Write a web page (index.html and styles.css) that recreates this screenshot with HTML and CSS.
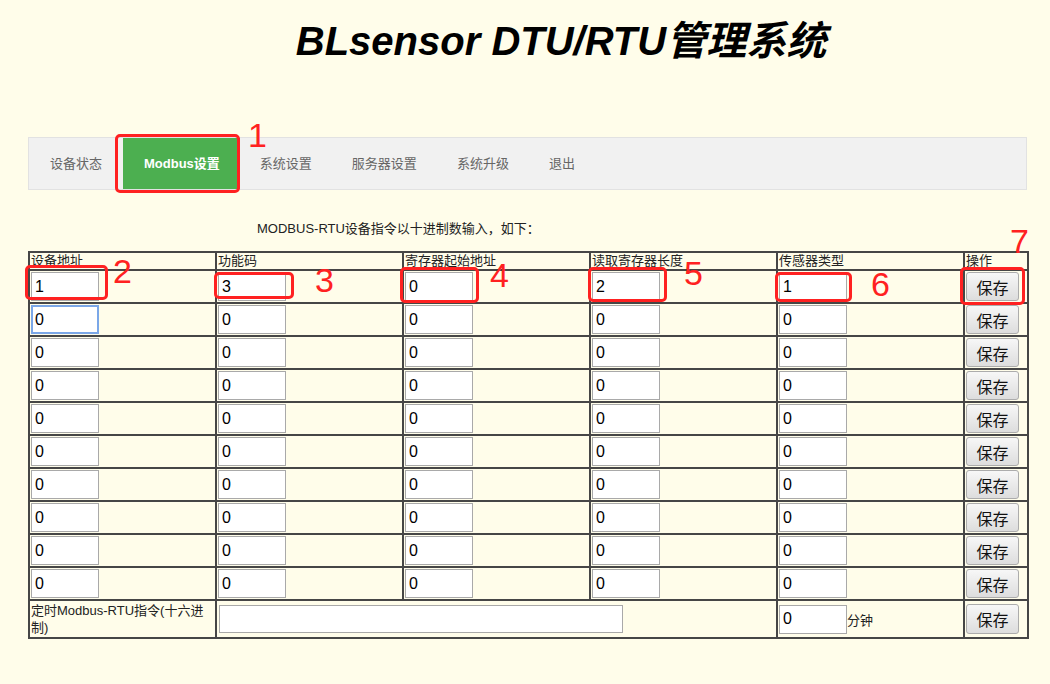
FILE: index.html
```html
<!DOCTYPE html>
<html lang="zh-CN">
<head>
    <meta charset="UTF-8">
    <title>BLsensor DTU/RTU管理系统</title>
    <link rel="stylesheet" href="styles.css">
</head>
<body>
    <h1 class="title">BLsensor DTU/RTU管理系统</h1>
    <div class="wrap">
        <ul class="nav">
            <li><a href="#">设备状态</a></li>
            <li><a href="#" class="active">Modbus设置</a></li>
            <li><a href="#">系统设置</a></li>
            <li><a href="#">服务器设置</a></li>
            <li><a href="#">系统升级</a></li>
            <li><a href="#">退出</a></li>
        </ul>
        <p class="tip">MODBUS-RTU设备指令以十进制数输入，如下：</p>
        <table class="grid">
            <colgroup>
                <col class="c-wide"><col class="c-wide"><col class="c-wide"><col class="c-wide"><col class="c-wide"><col class="c-op">
            </colgroup>
            <tr class="head">
                <td>设备地址</td>
                <td>功能码</td>
                <td>寄存器起始地址</td>
                <td>读取寄存器长度</td>
                <td>传感器类型</td>
                <td>操作</td>
            </tr>
            <tr>
                <td><input class="num" type="text" value="1"></td>
                <td><input class="num" type="text" value="3"></td>
                <td><input class="num" type="text" value="0"></td>
                <td><input class="num" type="text" value="2"></td>
                <td><input class="num" type="text" value="1"></td>
                <td><button class="save">保存</button></td>
            </tr>
            <tr>
                <td><input class="num focus" type="text" value="0"></td>
                <td><input class="num" type="text" value="0"></td>
                <td><input class="num" type="text" value="0"></td>
                <td><input class="num" type="text" value="0"></td>
                <td><input class="num" type="text" value="0"></td>
                <td><button class="save">保存</button></td>
            </tr>
            <tr>
                <td><input class="num" type="text" value="0"></td>
                <td><input class="num" type="text" value="0"></td>
                <td><input class="num" type="text" value="0"></td>
                <td><input class="num" type="text" value="0"></td>
                <td><input class="num" type="text" value="0"></td>
                <td><button class="save">保存</button></td>
            </tr>
            <tr>
                <td><input class="num" type="text" value="0"></td>
                <td><input class="num" type="text" value="0"></td>
                <td><input class="num" type="text" value="0"></td>
                <td><input class="num" type="text" value="0"></td>
                <td><input class="num" type="text" value="0"></td>
                <td><button class="save">保存</button></td>
            </tr>
            <tr>
                <td><input class="num" type="text" value="0"></td>
                <td><input class="num" type="text" value="0"></td>
                <td><input class="num" type="text" value="0"></td>
                <td><input class="num" type="text" value="0"></td>
                <td><input class="num" type="text" value="0"></td>
                <td><button class="save">保存</button></td>
            </tr>
            <tr>
                <td><input class="num" type="text" value="0"></td>
                <td><input class="num" type="text" value="0"></td>
                <td><input class="num" type="text" value="0"></td>
                <td><input class="num" type="text" value="0"></td>
                <td><input class="num" type="text" value="0"></td>
                <td><button class="save">保存</button></td>
            </tr>
            <tr>
                <td><input class="num" type="text" value="0"></td>
                <td><input class="num" type="text" value="0"></td>
                <td><input class="num" type="text" value="0"></td>
                <td><input class="num" type="text" value="0"></td>
                <td><input class="num" type="text" value="0"></td>
                <td><button class="save">保存</button></td>
            </tr>
            <tr>
                <td><input class="num" type="text" value="0"></td>
                <td><input class="num" type="text" value="0"></td>
                <td><input class="num" type="text" value="0"></td>
                <td><input class="num" type="text" value="0"></td>
                <td><input class="num" type="text" value="0"></td>
                <td><button class="save">保存</button></td>
            </tr>
            <tr>
                <td><input class="num" type="text" value="0"></td>
                <td><input class="num" type="text" value="0"></td>
                <td><input class="num" type="text" value="0"></td>
                <td><input class="num" type="text" value="0"></td>
                <td><input class="num" type="text" value="0"></td>
                <td><button class="save">保存</button></td>
            </tr>
            <tr>
                <td><input class="num" type="text" value="0"></td>
                <td><input class="num" type="text" value="0"></td>
                <td><input class="num" type="text" value="0"></td>
                <td><input class="num" type="text" value="0"></td>
                <td><input class="num" type="text" value="0"></td>
                <td><button class="save">保存</button></td>
            </tr>
            <tr class="timer">
                <td class="label">定时Modbus-RTU指令(十六进制)</td>
                <td colspan="3"><input class="cmd" type="text" value=""></td>
                <td><input class="num" type="text" value="0"><span class="unit">分钟</span></td>
                <td><button class="save save-tall">保存</button></td>
            </tr>
        </table>
    </div>

    <!-- annotations drawn over the screenshot -->
    <div class="marks">
        <div class="box b1"></div><span class="tag t1">1</span>
        <div class="box b2"></div><span class="tag t2">2</span>
        <div class="box b3"></div><span class="tag t3">3</span>
        <div class="box b4"></div><span class="tag t4">4</span>
        <div class="box b5"></div><span class="tag t5">5</span>
        <div class="box b6"></div><span class="tag t6">6</span>
        <div class="box b7"></div><span class="tag t7">7</span>
    </div>
</body>
</html>
```

FILE: styles.css
```css
body {
    margin: 0;
    background: #fffdea;
    font-family: "Liberation Sans", "Noto Sans CJK SC", sans-serif;
    color: #222;
    position: relative;
    min-height: 684px;
}
.title {
    margin: 18px 0 0 0;
    padding-left: 72px;
    text-align: center;
    font-size: 40px;
    line-height: 46px;
    font-weight: bold;
    font-style: italic;
    color: #000;
}
.wrap {
    margin-left: 28px;
    width: 999px;
}
.nav {
    list-style: none;
    margin: 73px 0 0 0;
    padding: 0 0 0 1px;
    display: flex;
    background: #f1f1f1;
    border: 1px solid #e2e2e2;
    height: 51px;
}
.nav a {
    display: block;
    padding: 0 20px;
    line-height: 51px;
    font-size: 13px;
    color: #666;
    text-decoration: none;
}
.nav a.active {
    background: #4caf50;
    color: #fff;
    font-weight: bold;
    padding: 0 20px 0 21px;
    margin-left: 1px;
}
.tip {
    margin: 31px 0 14px 229px;
    font-size: 13px;
    line-height: 16px;
}
.grid {
    border-collapse: collapse;
    table-layout: fixed;
    width: 999px;
    font-size: 13px;
}
.c-wide { width: 187px; }
.c-op { width: 64px; }
.grid td {
    border: 2px solid #464646;
    padding: 1px 1px;
    vertical-align: middle;
    height: 29px;
}
.grid .head td {
    height: 16px;
    padding: 0 1px;
    line-height: 16px;
    vertical-align: top;
}
.num, .cmd {
    box-sizing: border-box;
    height: 29px;
    border: 1px solid #a9a9a9;
    background: #fff;
    font-family: "Liberation Sans", sans-serif;
    font-size: 16px;
    color: #000;
    padding: 0 3px;
    margin: 0;
    vertical-align: middle;
}
.num { width: 68px; }
.num.focus {
    border: 2px solid #7ba7e8;
    padding: 0 2px;
}
.cmd {
    width: 404px;
    height: 28px;
    margin-left: 1px;
}
.save {
    box-sizing: border-box;
    width: 53px;
    height: 29px;
    padding: 0;
    margin: 0;
    border: 1px solid #acacac;
    border-radius: 3px;
    background: linear-gradient(#f7f7f7, #dddddd);
    font-family: "Noto Sans CJK SC", sans-serif;
    font-size: 16px;
    color: #111;
    vertical-align: middle;
}
.save-tall { height: 30px; }
.timer td { height: 34px; }
.timer .label {
    line-height: 17px;
    padding: 0 1px;
}
.unit {
    vertical-align: middle;
    font-size: 13px;
}

/* red annotation marks */
.marks .box {
    position: absolute;
    box-sizing: border-box;
    border: 3px solid #ff2121;
    border-radius: 5px;
}
.b1 { left: 115px; top: 134px; width: 125px; height: 59px; }
.b2 { left: 25px; top: 265px; width: 83px; height: 35px; }
.b3 { left: 214px; top: 272px; width: 80px; height: 27px; }
.b4 { left: 400px; top: 267px; width: 79px; height: 36px; }
.b5 { left: 588px; top: 267px; width: 79px; height: 35px; }
.b6 { left: 775px; top: 272px; width: 77px; height: 30px; }
.b7 { left: 960px; top: 267px; width: 65px; height: 38px; }
.marks .tag {
    position: absolute;
    font-family: "Liberation Sans", sans-serif;
    font-size: 34px;
    line-height: 34px;
    color: #ff2121;
}
.t1 { left: 248px; top: 118px; }
.t2 { left: 113px; top: 254px; }
.t3 { left: 315px; top: 263px; }
.t4 { left: 490px; top: 258px; }
.t5 { left: 684px; top: 256px; }
.t6 { left: 871px; top: 267px; }
.t7 { left: 1010px; top: 224px; }
```
